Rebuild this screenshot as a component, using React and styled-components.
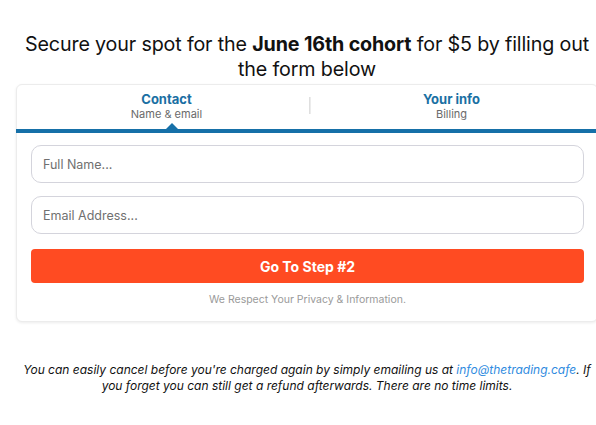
import React from "react";
import styled, { createGlobalStyle } from "styled-components";

const Global = createGlobalStyle`
  html, body { margin: 0; padding: 0; overflow: hidden; background: #fff; }
  body { font-family: "Inter", "DejaVu Sans", sans-serif; color: #111; }
  * { box-sizing: border-box; }
`;

const Page = styled.div`
  width: 582px;
  margin-left: 16px;
  padding-top: 32px;
`;

const Heading = styled.h1`
  margin: 0 0 2px;
  font-size: 19.7px;
  line-height: 25px;
  font-weight: 400;
  text-align: center;
  color: #111;
  letter-spacing: -0.15px;
  b { font-weight: 700; }
`;

const Card = styled.div`
  border: 1px solid #ececec;
  border-radius: 6px;
  box-shadow: 0 1px 3px rgba(0,0,0,0.08);
  background: #fff;
  padding-bottom: 14px;
`;

const Tabs = styled.div`
  display: grid;
  grid-template-columns: 1fr 1fr;
  height: 48px;
  border-bottom: 4px solid #1670a8;
  margin: 0 -1px;
  padding: 0 4px 0 8px;
`;

const Tab = styled.div`
  position: relative;
  display: flex;
  flex-direction: column;
  align-items: center;
  justify-content: center;
  padding-bottom: 2px;
  ${p => p.$divider && `
    &::before {
      content: "";
      position: absolute;
      left: 0;
      top: 12px;
      width: 2px;
      height: 17px;
      background: linear-gradient(to right, #d8d8d8, #f3f3f3);
    }
  `}
  ${p => p.$active && `
    &::after {
      content: "";
      position: absolute;
      bottom: 0;
      left: calc(50% - 1px);
      border-left: 6px solid transparent;
      border-right: 6px solid transparent;
      border-bottom: 6px solid #1670a8;
    }
  `}
`;

const TabTitle = styled.div`
  font-size: 13px;
  font-weight: 700;
  color: #1a6fa3;
  line-height: 16px;
`;

const TabSub = styled.div`
  font-size: 11px;
  color: #6a6a6a;
  line-height: 14px;
`;

const Form = styled.div`
  display: flex;
  flex-direction: column;
  padding: 12px 13px 0 14px;
`;

const Input = styled.input`
  height: 38px;
  border: 1px solid #d4d4dc;
  border-radius: 10px;
  padding: 0 11px;
  font-family: inherit;
  font-size: 12.5px;
  color: #333;
  margin-bottom: 13px;
  outline: none;
  &::placeholder { color: #707070; }
`;

const Button = styled.button`
  height: 34px;
  margin-top: 2px;
  border: none;
  border-radius: 4px;
  background: #ff4b22;
  color: #fff;
  font-family: inherit;
  font-size: 14px;
  font-weight: 700;
  cursor: pointer;
`;

const Privacy = styled.div`
  text-align: center;
  font-size: 10.5px;
  color: #9a9a9a;
  margin-top: 10px;
  line-height: 14px;
`;

const Footer = styled.p`
  margin: 40px 0 0;
  font-size: 12px;
  line-height: 16px;
  font-style: italic;
  text-align: center;
  color: #111;
  a { color: #2f8be0; text-decoration: none; }
`;

export default function App() {
  return (
    <>
      <Global />
      <Page>
        <Heading>
          Secure your spot for the <b>June 16th cohort</b> for $5 by filling out the form below
        </Heading>
        <Card>
          <Tabs>
            <Tab $active>
              <TabTitle>Contact</TabTitle>
              <TabSub>Name &amp; email</TabSub>
            </Tab>
            <Tab $divider>
              <TabTitle>Your info</TabTitle>
              <TabSub>Billing</TabSub>
            </Tab>
          </Tabs>
          <Form>
            <Input placeholder="Full Name..." />
            <Input placeholder="Email Address..." />
            <Button>Go To Step #2</Button>
            <Privacy>We Respect Your Privacy &amp; Information.</Privacy>
          </Form>
        </Card>
        <Footer>
          You can easily cancel before you're charged again by simply emailing us at{" "}
          <a href="#">info@thetrading.cafe</a>. If you forget you can still get a refund afterwards. There are no time limits.
        </Footer>
      </Page>
    </>
  );
}
